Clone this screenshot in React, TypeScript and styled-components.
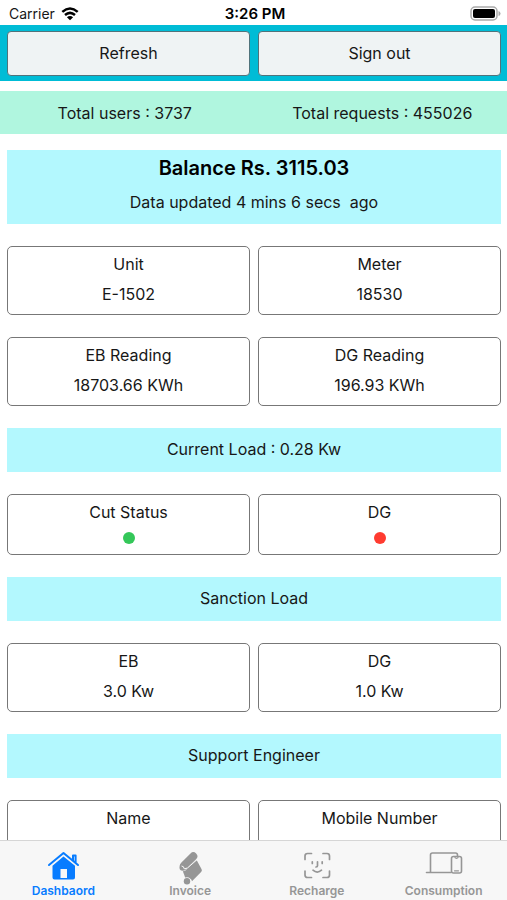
import React, { useState } from "react";
import styled, { createGlobalStyle } from "styled-components";

const GlobalStyle = createGlobalStyle`
  * { box-sizing: border-box; }
  body { margin: 0; background: #fff; }
`;

const Screen = styled.div`
  display: flex;
  flex-direction: column;
  height: 100vh;
  overflow: hidden;
  background: #fff;
  color: #171717;
  font-family: Inter, "Liberation Sans", sans-serif;
  font-size: 16px;
  line-height: 24px;
`;

const StatusBar = styled.header`
  display: grid;
  grid-template-columns: 1fr auto 1fr;
  align-items: center;
  flex: none;
  height: 25px;
  padding: 2px 6px 0 9px;
  font-size: 14px;
  line-height: 20px;
`;

const Carrier = styled.div`
  display: flex;
  align-items: center;
  gap: 6px;
`;

const Clock = styled.time`
  color: #000;
  font-size: 15px;
  font-weight: 600;
`;

const BatteryIcon = styled.svg`
  justify-self: end;
`;

const Pair = styled.div`
  display: grid;
  grid-template-columns: 1fr 1fr;
  gap: 8px;
`;

const ActionBar = styled(Pair)`
  flex: none;
  padding: 6px 6px 5px 7px;
  background: #00bcd6;
`;

const ActionButton = styled.button`
  height: 45px;
  padding: 0 0 2px;
  border: 1px solid #50737b;
  border-radius: 4px;
  background: #eff3f4;
  color: inherit;
  font: inherit;
  cursor: pointer;
`;

const Totals = styled(Pair)`
  flex: none;
  margin-top: 10px;
  padding: 10px 0 9px;
  background: #b0f6df;
  text-align: center;
`;

const Content = styled.main`
  display: flex;
  flex: 1;
  flex-direction: column;
  gap: 22px;
  min-height: 0;
  overflow-y: auto;
  scrollbar-width: none;
  margin-top: 16px;
  padding: 0 6px 0 7px;
  text-align: center;

  > * { flex: none; }
`;

const Band = styled.section`
  padding: 9px 0 11px;
  background: #b3f8fe;
`;

const BalanceBand = styled(Band)`
  display: flex;
  flex-direction: column;
  gap: 8px;
  padding: 4px 0 10px;
`;

const Balance = styled.h1`
  margin: 0;
  color: #000;
  font-size: 20px;
  font-weight: 600;
  line-height: 28px;
`;

const Updated = styled.p`
  margin: 0;
  white-space: pre;
`;

const BandTitle = styled.h2`
  margin: 0;
  font-size: 16px;
  font-weight: 400;
`;

const Card = styled.div<{ $compact?: boolean }>`
  display: flex;
  flex-direction: column;
  align-items: center;
  gap: 6px;
  height: ${({ $compact }) => ($compact ? 61 : 69)}px;
  padding-top: 5px;
  border: 1px solid #777;
  border-radius: 5px;
`;

const Dot = styled.span<{ $color: string }>`
  width: 12px;
  height: 12px;
  margin-top: 2px;
  border-radius: 50%;
  background: ${({ $color }) => $color};
`;

const TabBar = styled.nav`
  display: grid;
  grid-template-columns: repeat(4, 1fr);
  flex: none;
  height: 60px;
  border-top: 1px solid #d6d6d6;
  background: #f7f7f7;
`;

const Tab = styled.button<{ $active: boolean }>`
  display: flex;
  flex-direction: column;
  align-items: center;
  padding: 8px 0 0;
  border: 0;
  background: none;
  color: ${({ $active }) => ($active ? "#087cff" : "#969696")};
  font: 600 12px/16px Inter, "Liberation Sans", sans-serif;
  cursor: pointer;

  svg { overflow: visible; }
`;

const HouseIcon = () => (
  <svg width="36" height="34" viewBox="0 0 36 34" aria-hidden="true">
    <path d="M4 16 18.500 4 33 16M28 11.500V6.500h2.600v7.200" fill="none" stroke="currentColor" strokeWidth="2" strokeLinejoin="round" strokeLinecap="round" />
    <path fillRule="evenodd" fill="currentColor" d="M18.500 7.400 30 16.800V28.500q0 2-2 2H9.500q-2 0-2-2V16.800zM15.500 20v9h6.500v-9z" />
  </svg>
);

const ScrollIcon = () => (
  <svg width="36" height="34" viewBox="0 0 36 34" aria-hidden="true">
    <path d="M21.300 7.300 12 16.500" stroke="currentColor" strokeWidth="8" strokeLinecap="round" />
    <circle cx="10.800" cy="18.500" r="3.300" fill="currentColor" />
    <path
      d="M10.800 22.200q3.900-.2 4.400-3.700L24.600 11l5 9.200q.8 1.500-.5 2.800L20 32.300q-.8-3-3.800-3.200-1.400 0-2.600.8l-1.400-4.200z"
      fill="currentColor"
    />
    <path d="M9.500 17q2.500.1 2.700 2.800L15.500 19 25 10.700" fill="none" stroke="#f7f7f7" strokeWidth="1" />
    <circle cx="15" cy="32" r="3.800" fill="#f7f7f7" />
    <circle cx="15" cy="32.200" r="3.200" fill="currentColor" />
  </svg>
);

const FaceIcon = () => (
  <svg width="36" height="34" viewBox="0 0 36 34" fill="none" stroke="currentColor" strokeWidth="1.700" strokeLinecap="round" strokeLinejoin="round" aria-hidden="true">
    <path d="M6 10.500V7q0-2.500 2.500-2.500h4M24 4.500h4Q30.500 4.500 30.500 7v3.500M30.500 22v4q0 2.500-2.500 2.500h-4M12.500 28.500h-4Q6 28.500 6 26v-4" />
    <path d="M13.300 12.800v1.700M23.200 12.800v1.700M18.500 12.800v4q0 1.200-1.500 1.200M14 21.200q4.200 3.700 8.500 0" />
  </svg>
);

const DevicesIcon = () => (
  <svg width="38" height="34" viewBox="0 0 38 34" fill="none" stroke="currentColor" strokeWidth="1.600" strokeLinecap="round" strokeLinejoin="round" aria-hidden="true">
    <path d="M5.500 23V6q0-2 2-2H30.500q2 0 2 2v1M1.500 23.500H26" />
    <rect x="26.500" y="7.500" width="10" height="16.500" rx="2" />
    <path d="M29.800 7.800q0 1.500 1.700 1.500t1.700-1.500M29.500 21.800h4" strokeWidth="1.200" />
  </svg>
);

const tabs = [
  { label: "Dashbaord", Icon: HouseIcon },
  { label: "Invoice", Icon: ScrollIcon },
  { label: "Recharge", Icon: FaceIcon },
  { label: "Consumption", Icon: DevicesIcon },
];

type Reading = { label: string; value?: string };

const ReadingPair = ({ items }: { items: Reading[] }) => (
  <Pair>
    {items.map(({ label, value }) => (
      <Card key={label}>
        <span>{label}</span>
        {value && <span>{value}</span>}
      </Card>
    ))}
  </Pair>
);

export default function App() {
  const [active, setActive] = useState("Dashbaord");

  return (
    <Screen>
      <GlobalStyle />
      <StatusBar>
        <Carrier>
          Carrier
          <svg width="18" height="14" viewBox="0 0 18 14" aria-hidden="true">
            <path d="M1.300 4.900q7.700-6.700 15.400 0M4 8q5-4.300 10 0" fill="none" stroke="#000" strokeWidth="2.500" />
            <path d="m5.900 10.200q3.100-2.600 6.200 0L9 13.300z" />
          </svg>
        </Carrier>
        <Clock>3:26 PM</Clock>
        <BatteryIcon width="31" height="15" viewBox="0 0 31 15" aria-hidden="true">
          <rect x="1" y="1" width="26" height="13" rx="4" fill="#fff" stroke="#aaa" strokeWidth="1.500" />
          <rect x="3" y="3" width="22" height="9" rx="2" />
          <path d="M28.500 5q2 .5 2 2.500t-2 2.500z" fill="#aaa" />
        </BatteryIcon>
      </StatusBar>
      <ActionBar>
        <ActionButton type="button">Refresh</ActionButton>
        <ActionButton type="button">Sign out</ActionButton>
      </ActionBar>
      <Totals>
        <span>Total users : 3737</span>
        <span>Total requests : 455026</span>
      </Totals>
      <Content>
        <BalanceBand>
          <Balance>Balance Rs. 3115.03</Balance>
          <Updated>{"Data updated 4 mins 6 secs  ago"}</Updated>
        </BalanceBand>
        <ReadingPair items={[{ label: "Unit", value: "E-1502" }, { label: "Meter", value: "18530" }]} />
        <ReadingPair items={[{ label: "EB Reading", value: "18703.66 KWh" }, { label: "DG Reading", value: "196.93 KWh" }]} />
        <Band><BandTitle>Current Load : 0.28 Kw</BandTitle></Band>
        <Pair>
          <Card $compact><span>Cut Status</span><Dot $color="#34c759" /></Card>
          <Card $compact><span>DG</span><Dot $color="#ff3b30" /></Card>
        </Pair>
        <Band><BandTitle>Sanction Load</BandTitle></Band>
        <ReadingPair items={[{ label: "EB", value: "3.0 Kw" }, { label: "DG", value: "1.0 Kw" }]} />
        <Band><BandTitle>Support Engineer</BandTitle></Band>
        <ReadingPair items={[{ label: "Name" }, { label: "Mobile Number" }]} />
      </Content>
      <TabBar>
        {tabs.map(({ label, Icon }) => (
          <Tab
            key={label}
            type="button"
            $active={label === active}
            aria-current={label === active ? "page" : undefined}
            onClick={() => setActive(label)}
          >
            <Icon />
            {label}
          </Tab>
        ))}
      </TabBar>
    </Screen>
  );
}
